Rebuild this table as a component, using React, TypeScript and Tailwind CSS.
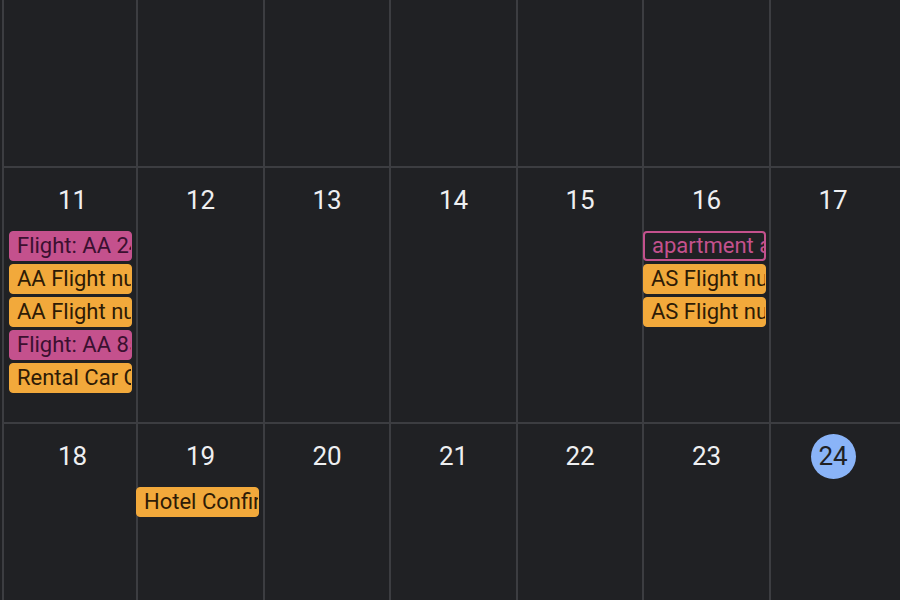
type Chip = { label: string; color: "pink" | "orange" | "outline" };

type Day = { n?: number; today?: boolean; chips?: Chip[]; shift?: string };

const rows: Day[][] = [
  [{}, {}, {}, {}, {}, {}, {}],
  [
    {
      n: 11,
      shift: "ml-[5px]",
      chips: [
        { label: "Flight: AA 2427", color: "pink" },
        { label: "AA Flight number 2427", color: "orange" },
        { label: "AA Flight number 853", color: "orange" },
        { label: "Flight: AA 853", color: "pink" },
        { label: "Rental Car Confirmation", color: "orange" },
      ],
    },
    { n: 12 },
    { n: 13 },
    { n: 14 },
    { n: 15 },
    {
      n: 16,
      shift: "-ml-[1px]",
      chips: [
        { label: "apartment available", color: "outline" },
        { label: "AS Flight number 1032", color: "orange" },
        { label: "AS Flight number 497", color: "orange" },
      ],
    },
    { n: 17 },
  ],
  [
    { n: 18 },
    { n: 19, shift: "-ml-[2px]", chips: [{ label: "Hotel Confirmation", color: "orange" }] },
    { n: 20 },
    { n: 21 },
    { n: 22 },
    { n: 23 },
    { n: 24, today: true },
  ],
];

const chipStyle = {
  pink: "bg-[#c4518d] text-[#3b1030] border border-[#c4518d]",
  orange: "bg-[#f2a93b] text-[#2e1b06] border border-[#f2a93b]",
  outline: "bg-[#202124] text-[#c4518d] border-2 border-[#c4518d]",
};

// number column nudges, the outer columns sit a little off centre
const numPad = ["pl-[5px]", "", "", "", "", "", "pr-[5px]"];

function EventChip({ chip, shift }: { chip: Chip; shift?: string }) {
  return (
    <div
      className={`w-[123px] h-[30px] rounded-[4px] pl-[7px] flex items-center overflow-hidden whitespace-nowrap text-[22px] leading-none ${chipStyle[chip.color]} ${shift ?? ""}`}
    >
      {chip.label}
    </div>
  );
}

export default function App() {
  return (
    <main
      className="w-[900px] h-[600px] overflow-hidden bg-[#202124] pl-[2px]"
      style={{ fontFamily: "Roboto, 'Liberation Sans', sans-serif" }}
    >
      <div className="grid h-full grid-cols-[134px_127px_126px_127px_126px_127px_1fr] grid-rows-[168px_256px_1fr]">
        {rows.map((row, r) =>
          row.map((day, c) => (
            <div
              key={`${r}-${c}`}
              className={`border-l-2 border-[#3c3d41] flex flex-col ${r < 2 ? "border-b-2" : ""}`}
            >
              {day.n && (
                <div className={`flex justify-center pt-[10px] h-[63px] ${numPad[c]}`}>
                  {day.today ? (
                    <span className="w-[45px] h-[45px] rounded-full bg-[#8ab4f8] text-[#202124] text-[26px] flex items-center justify-center">
                      {day.n}
                    </span>
                  ) : (
                    <span className="h-[45px] flex items-center text-[26px] text-[#eeeff1]">{day.n}</span>
                  )}
                </div>
              )}
              {day.chips && (
                <div className="flex flex-col gap-[3px]">
                  {day.chips.map((chip, i) => (
                    <EventChip key={i} chip={chip} shift={day.shift} />
                  ))}
                </div>
              )}
            </div>
          ))
        )}
      </div>
    </main>
  );
}
